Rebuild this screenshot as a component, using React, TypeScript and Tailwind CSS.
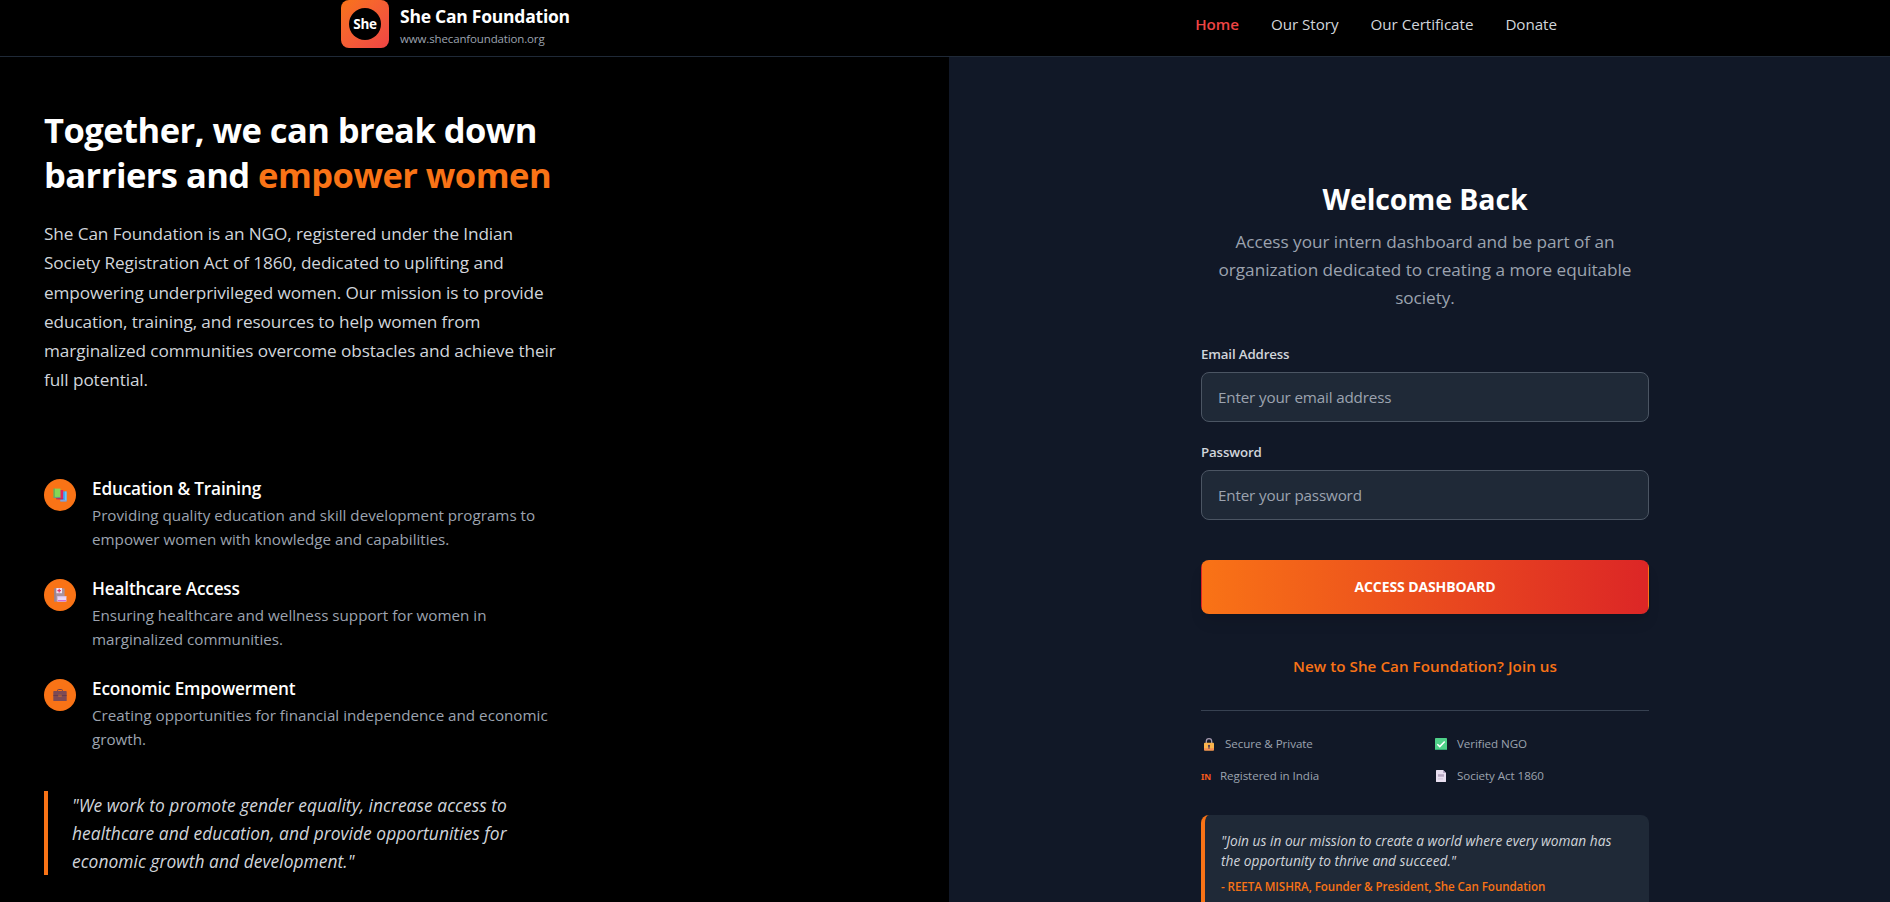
import type { ReactNode } from "react";

function BooksIcon() {
  return (
    <svg width="14" height="14" viewBox="0 0 14 14" aria-hidden="true">
      <path d="M7.4 3.4h6.1v10H7.4z" fill="#3fa9f5" />
      <path d="M12.2 3.4h1.3v8.8h-1.3z" fill="#6fd0ff" />
      <path d="M7.4 12.1h6.1v1.3H7.4z" fill="#8fa3d8" />
      <path d="M4.6 2h5.6v9.3H4.6z" fill="#e0245e" />
      <path d="M3 10.2h7.2v1.1H3z" fill="#b5305f" />
      <path d="M.6.6h6.9v9H.6z" fill="#86d654" />
      <path d="M.6.6h1v9h-1z" fill="#55a05c" />
      <path d="M.6 8.9h6.9v1H.6z" fill="#5f9e86" />
    </svg>
  );
}

function HospitalIcon() {
  return (
    <svg width="14" height="14" viewBox="0 0 14 14" aria-hidden="true">
      <path d="M1.4.4h10.2v13.2H1.4z" fill="#a9929f" />
      <path d="M1.4.4h1.2v13.2H1.4z" fill="#8d7f97" />
      <path d="M3.4 0H9v5.2H3.400z" fill="#f3e4f6" />
      <path d="M5.6.8h1.200v1.200H8v1.200H6.800v1.200H5.600V3.200H4.400V2h1.200z" fill="#e2386b" />
      <path d="M4.400 8.300h9v5.300h-9z" fill="#e9d8fb" />
      <path d="M4.800 12.200h8.200v1H4.800z" fill="#c94fd0" />
      <path d="M4.400 8.300h9v.9h-9z" fill="#d3bdec" />
    </svg>
  );
}

function BriefcaseIcon() {
  return (
    <svg width="14" height="14" viewBox="0 0 14 14" aria-hidden="true">
      <path d="M4.600 3.400V2.300c0-.5.3-.8.8-.8h3.200c.5 0 .8.3.8.8v1.100" fill="none" stroke="#6b4050" strokeWidth="1" />
      <path d="M1 3h12c.4 0 .7.3.7.7v8.700c0 .4-.3.7-.7.7H1c-.4 0-.7-.3-.7-.7V3.700c0-.4.3-.7.7-.7z" fill="#7d4a55" />
      <path d="M.3 7.300h13.400v.7H.3z" fill="#5f3848" />
      <path d="M5.500 6.700h3v2.300h-3z" fill="#c06a3a" />
      <path d="M6.200 7.400h1.600v.8H6.200z" fill="#5f3848" />
    </svg>
  );
}

function LockIcon() {
  return (
    <svg width="12" height="13" viewBox="0 0 12 13" aria-hidden="true">
      <path d="M3.300 5.500V3.400a2.700 2.700 0 0 1 5.400 0v2.100" fill="none" stroke="#a79bb0" strokeWidth="1.300" />
      <rect x="1" y="4.800" width="10" height="7.800" rx=".8" fill="#fbb44c" />
      <path d="M1 10.300h10v1.500a.8.8 0 0 1-.8.8H1.800a.8.8 0 0 1-.8-.8z" fill="#f58d52" />
      <circle cx="6" cy="7.800" r="1.100" fill="#4c3a52" />
      <path d="M5.400 8h1.200v2.700H5.400z" fill="#4c3a52" />
    </svg>
  );
}

function CheckIcon() {
  return (
    <svg width="12" height="12" viewBox="0 0 12 12" aria-hidden="true">
      <rect width="12" height="12" rx=".8" fill="#4fd089" />
      <path d="M0 11h12v.2a.8.8 0 0 1-.8.8H.8a.8.8 0 0 1-.8-.8z" fill="#35a873" />
      <path d="m2.300 6.200 2.500 2.400 4.900-5.100" fill="none" stroke="#fff" strokeWidth="1.500" />
    </svg>
  );
}

function DocumentIcon() {
  return (
    <svg width="12" height="12" viewBox="0 0 12 12" aria-hidden="true">
      <path d="M1 .6C1 .3 1.300 0 1.600 0H8l3 3v8.400c0 .3-.3.6-.6.6H1.600a.6.6 0 0 1-.6-.6z" fill="#e9dff0" />
      <path d="M8 0v3h3z" fill="#b9a9c6" />
      <path d="M3 4.200h6v2.500H3z" fill="#b8a8c2" />
      <path d="M3 8.500h5v.8H3z" fill="#cbbfd4" />
    </svg>
  );
}

function Feature({ icon, title, children }: { icon: ReactNode; title: string; children: ReactNode }) {
  return (
    <li className="flex gap-4">
      <span className="mt-1 flex size-8 shrink-0 items-center justify-center rounded-full bg-[#f97316]">{icon}</span>
      <div>
        <h3 className="text-[17.2px] leading-7 font-semibold tracking-[-0.17px] text-white">{title}</h3>
        <p className="text-[15.2px] leading-6 text-[#9ca3af]">{children}</p>
      </div>
    </li>
  );
}

function Field({ label, type, placeholder }: { label: string; type: string; placeholder: string }) {
  return (
    <label className="block">
      <span className="mb-2 block text-[13.3px] leading-5 font-semibold tracking-[-0.15px] text-[#d1d5db]">{label}</span>
      <input
        type={type}
        placeholder={placeholder}
        className="block h-[50px] w-full rounded-lg border border-[#4b5563] bg-[#1f2937] px-4 text-[15.2px] tracking-[-0.15px] text-white placeholder:text-[#9ca3af]"
      />
    </label>
  );
}

function Badge({ icon, children }: { icon: ReactNode; children: ReactNode }) {
  return (
    <div className="flex h-5 items-center gap-2">
      {icon}
      <span className="text-[11.6px] leading-5 tracking-[-0.06px]">{children}</span>
    </div>
  );
}

function IconSlot({ children }: { children: ReactNode }) {
  return <span className="flex w-4 justify-center">{children}</span>;
}

export default function App() {
  return (
    <div className="flex h-[902px] flex-col overflow-hidden bg-black font-['Open_Sans','Noto_Sans',sans-serif] whitespace-nowrap">
      <header className="flex h-[57px] shrink-0 items-start justify-between border-b border-[#1f2937] pr-[333px] pl-[341px]">
        <div className="flex h-12 items-center gap-[11px]">
          <div className="flex size-12 items-center justify-center rounded-lg bg-linear-to-br from-[#f97316] to-[#ef4444]">
            <span className="flex size-8 items-center justify-center rounded-full bg-black text-[13.5px] font-bold tracking-[-0.2px] text-white">
              She
            </span>
          </div>
          <div>
            <p className="text-[17.5px] leading-7 font-bold tracking-[-0.24px] text-white">She Can Foundation</p>
            <p className="pt-px text-[11.5px] leading-4 tracking-[-0.14px] text-[#9ca3af]">www.shecanfoundation.org</p>
          </div>
        </div>
        <nav className="flex h-12 items-center gap-8 text-[15.2px] leading-6 tracking-[-0.04px] text-[#d1d5db]">
          <a className="font-semibold text-[#ef4444]">Home</a>
          <a>Our Story</a>
          <a>Our Certificate</a>
          <a>Donate</a>
        </nav>
      </header>

      <main className="flex min-h-0 flex-1">
        <section className="w-[949px] shrink-0 pt-[50px] pl-11">
          <h1 className="text-[34.5px] leading-[45px] font-bold tracking-[-0.53px] text-white">
            Together, we can break down
            <br />
            barriers and <span className="text-[#f97316]">empower women</span>
          </h1>
          <p className="mt-[22px] text-[17.2px] leading-[29.25px] tracking-[-0.1px] text-[#d1d5db]">
            She Can Foundation is an NGO, registered under the Indian
            <br />
            Society Registration Act of 1860, dedicated to uplifting and
            <br />
            empowering underprivileged women. Our mission is to provide
            <br />
            education, training, and resources to help women from
            <br />
            marginalized communities overcome obstacles and achieve their
            <br />
            full potential.
          </p>
          <ul className="mt-[80.5px] flex flex-col gap-6">
            <Feature icon={<BooksIcon />} title="Education & Training">
              Providing quality education and skill development programs to
              <br />
              empower women with knowledge and capabilities.
            </Feature>
            <Feature icon={<HospitalIcon />} title="Healthcare Access">
              Ensuring healthcare and wellness support for women in
              <br />
              marginalized communities.
            </Feature>
            <Feature icon={<BriefcaseIcon />} title="Economic Empowerment">
              Creating opportunities for financial independence and economic
              <br />
              growth.
            </Feature>
          </ul>
          <blockquote className="mt-10 border-l-4 border-[#f97316] pl-6 text-[17.4px] leading-7 tracking-[0.04px] text-[#d1d5db] italic">
            "We work to promote gender equality, increase access to
            <br />
            healthcare and education, and provide opportunities for
            <br />
            economic growth and development."
          </blockquote>
        </section>

        <section className="flex flex-1 justify-center bg-[#111827] pt-[124px] pl-[11px]">
          <div className="w-[448px]">
            <h2 className="text-center text-[28.5px] leading-9 font-bold tracking-[-0.1px] text-white">Welcome Back</h2>
            <p className="mt-[11px] text-center text-[17.2px] leading-7 tracking-[-0.04px] text-[#9ca3af]">
              Access your intern dashboard and be part of an
              <br />
              organization dedicated to creating a more equitable
              <br />
              society.
            </p>
            <form className="mt-8">
              <div className="flex flex-col gap-5">
                <Field label="Email Address" type="email" placeholder="Enter your email address" />
                <Field label="Password" type="password" placeholder="Enter your password" />
              </div>
              <button
                type="button"
                className="mt-10 block h-[54px] w-full rounded-lg border border-transparent bg-[linear-gradient(to_right,#f97316,#dc2626)] text-[14px] leading-5 font-bold tracking-[-0.1px] text-white shadow-lg"
              >
                ACCESS DASHBOARD
              </button>
            </form>
            <p className="mt-10 text-center text-[15.2px] leading-6 font-semibold tracking-[0.04px] text-[#f97316]">
              New to She Can Foundation? Join us
            </p>
            <div className="mt-8 grid grid-cols-2 gap-x-4 gap-y-3 border-t border-[#374151] pt-[23px] text-[#9ca3af]">
              <Badge icon={<IconSlot><LockIcon /></IconSlot>}>Secure & Private</Badge>
              <Badge icon={<IconSlot><CheckIcon /></IconSlot>}>Verified NGO</Badge>
              <Badge icon={<span className="w-[11px] pt-0.5 font-['Noto_Sans'] text-[8.5px] font-bold text-[#f55a1c]">IN</span>}>
                Registered in India
              </Badge>
              <Badge icon={<IconSlot><DocumentIcon /></IconSlot>}>Society Act 1860</Badge>
            </div>
            <figure className="mt-[29px] rounded-lg border-l-4 border-[#f97316] bg-[#1f2937] p-4">
              <blockquote className="text-[13.7px] leading-5 tracking-[0.01px] text-[#d1d5db] italic">
                "Join us in our mission to create a world where every woman has
                <br />
                the opportunity to thrive and succeed."
              </blockquote>
              <figcaption className="mt-2 text-[11.6px] leading-4 font-semibold tracking-[-0.07px] text-[#f97316]">
                - REETA MISHRA, Founder & President, She Can Foundation
              </figcaption>
            </figure>
          </div>
        </section>
      </main>
    </div>
  );
}
